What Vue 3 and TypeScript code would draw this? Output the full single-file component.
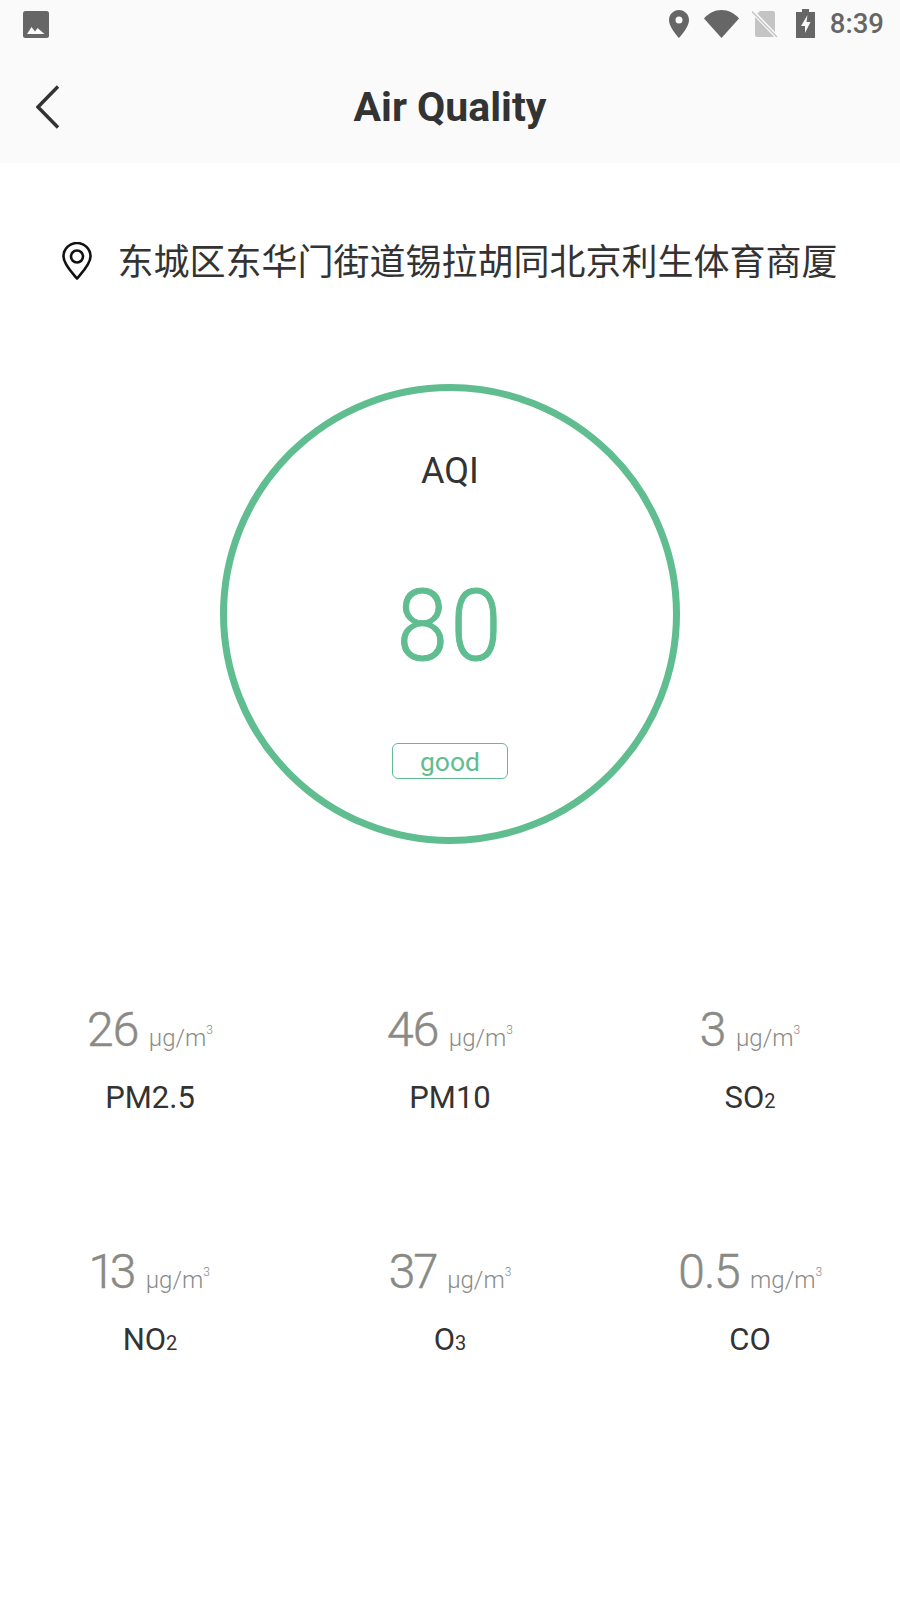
<template>
  <div class="page">
    <header class="top">
      <div class="status-bar">
        <svg class="icon-image" width="26" height="27" viewBox="0 0 26 27">
          <rect width="26" height="27" rx="2.5" fill="#666" />
          <path d="M4 23l4.500-7 3.500 4.500 2.500-3.500 7 6z" fill="#fafafa" />
        </svg>
        <div class="status-right">
          <svg width="20" height="28" viewBox="0 0 20 28">
            <path fill="#666" fill-rule="evenodd" d="M10 0C4.500 0 0 4.400 0 10c0 7.500 10 18 10 18s10-10.500 10-18C20 4.400 15.500 0 10 0zm0 6.500a3.500 3.500 0 1 1 0 7 3.500 3.500 0 0 1 0-7z" />
          </svg>
          <svg width="35" height="28" viewBox="0 0 35 28">
            <path fill="#666" d="M0 8.500C4.500 3.200 10.700 0 17.500 0S30.500 3.200 35 8.500L17.500 28z" />
          </svg>
          <svg class="icon-sim" width="26" height="28" viewBox="0 0 26 28">
            <path fill="#c4c4c4" d="M8 1h13a2 2 0 0 1 2 2v22a2 2 0 0 1-2 2H5a2 2 0 0 1-2-2V6z" />
            <path d="M0 1l25 26" stroke="#fafafa" stroke-width="4" />
            <path d="M0 1.500l25 25.500" stroke="#c4c4c4" stroke-width="1.300" />
          </svg>
          <svg class="icon-battery" width="19" height="29" viewBox="0 0 19 29">
            <path fill="#666" d="M6 0h7v3h6v26H0V3h6z" />
            <path fill="#fafafa" d="M11.500 6L5 17h4v7l5.500-11h-4z" />
          </svg>
          <span class="clock">8:39</span>
        </div>
      </div>
      <div class="toolbar">
        <svg class="back" width="24" height="44" viewBox="0 0 24 44">
          <path d="M22 1.500L2 22l20 20.500" fill="none" stroke="#333" stroke-width="3.400" />
        </svg>
        <h1 class="title">Air Quality</h1>
      </div>
    </header>

    <div class="location">
      <svg class="icon-place" width="30" height="38" viewBox="0 0 30 38">
        <path d="M15 36.500C11 31.500 1.500 22.500 1.500 14.500a13.500 13.500 0 0 1 27 0c0 8-9.500 17-13.500 22z" fill="none" stroke="#111" stroke-width="2.600" stroke-linejoin="round" />
        <circle cx="15" cy="14.500" r="6" fill="none" stroke="#111" stroke-width="2.600" />
      </svg>
      <span>东城区东华门街道锡拉胡同北京利生体育商厦</span>
    </div>

    <div class="gauge">
      <div class="gauge-label">AQI</div>
      <div class="gauge-value">{{ aqi }}</div>
      <div class="gauge-badge">good</div>
    </div>

    <div class="metrics">
      <div v-for="item in metrics" :key="item.name + item.sub" class="metric">
        <div class="reading">
          <span class="num">{{ item.value }}</span>
          <span class="unit">{{ item.unit }}<span class="cube">3</span></span>
        </div>
        <div class="name">{{ item.name }}<span v-if="item.sub" class="low">{{ item.sub }}</span></div>
      </div>
    </div>
  </div>
</template>

<script setup lang="ts">
interface Metric {
  value: string
  unit: string
  name: string
  sub?: string
}

const aqi = 80

const metrics: Metric[] = [
  { value: '26', unit: 'μg/m', name: 'PM2.5' },
  { value: '46', unit: 'μg/m', name: 'PM10' },
  { value: '3', unit: 'μg/m', name: 'SO', sub: '2' },
  { value: '13', unit: 'μg/m', name: 'NO', sub: '2' },
  { value: '37', unit: 'μg/m', name: 'O', sub: '3' },
  { value: '0.5', unit: 'mg/m', name: 'CO' },
]
</script>

<style>
html,
body {
  background: #fff;
}
</style>

<style scoped>
.page {
  width: 900px;
  height: 1600px;
  background: #fff;
  font-family: Roboto, "Noto Sans CJK SC", sans-serif;
  color: #333;
  overflow: hidden;
}

.top {
  height: 163px;
  background: #fafafa;
}

.status-bar {
  height: 54px;
  padding: 9px 16px 0 23px;
  box-sizing: border-box;
  display: flex;
  justify-content: space-between;
  align-items: flex-start;
}

.icon-image {
  margin-top: 2px;
}

.status-right {
  display: flex;
  align-items: center;
  gap: 15px;
}

.icon-sim {
  margin-left: -2px;
}

.icon-battery {
  margin-left: 3px;
}

.clock {
  font-size: 27.5px;
  font-weight: 500;
  line-height: 29px;
  color: #666;
}

.toolbar {
  height: 105px;
  display: grid;
  grid-template-columns: 1fr auto 1fr;
  align-items: center;
}

.back {
  margin-left: 36px;
}

.title {
  margin: 0;
  font-size: 41px;
  font-weight: 700;
  line-height: 48px;
  color: #333;
}

.location {
  margin-top: 71px;
  display: flex;
  justify-content: center;
  align-items: center;
  gap: 25px;
  font-size: 36px;
  line-height: 50px;
  font-family: "Noto Sans CJK SC", sans-serif;
  color: #333;
}

.icon-place {
  margin-top: 3px;
}

.gauge {
  width: 460px;
  height: 460px;
  margin: 100px auto 0;
  box-sizing: border-box;
  border: 7.500px solid #5fbd8f;
  border-radius: 50%;
  display: flex;
  flex-direction: column;
  align-items: center;
  padding-top: 59px;
}

.gauge-label {
  font-size: 36px;
  line-height: 42px;
  color: #333;
}

.gauge-value {
  margin-top: 75px;
  font-size: 100px;
  font-weight: 300;
  line-height: 118px;
  color: #5fbd8f;
  letter-spacing: 3px;
  transform: scaleX(0.92);
  -webkit-text-stroke: 1px #5fbd8f;
}

.gauge-badge {
  margin-top: 58px;
  width: 116px;
  height: 36px;
  box-sizing: border-box;
  border: 1px solid #5fbd8f;
  border-radius: 6px;
  text-align: center;
  font-size: 26.5px;
  line-height: 35px;
  color: #5fbd8f;
}

.metrics {
  margin-top: 158px;
  display: grid;
  grid-template-columns: repeat(3, 300px);
  grid-auto-rows: 242px;
}

.metric {
  display: flex;
  flex-direction: column;
  align-items: center;
}

.reading {
  display: flex;
  align-items: baseline;
  gap: 11px;
  line-height: 56px;
  color: #8a8a85;
}

.num {
  font-size: 48px;
  font-weight: 300;
  letter-spacing: -1.500px;
  font-variant-numeric: proportional-nums;
  -webkit-text-stroke: 0.5px #8a8a85;
}

.unit {
  font-size: 24px;
  font-weight: 300;
  color: #8a8a85;
}

.cube {
  font-size: 12px;
  vertical-align: 12px;
  line-height: 0;
}

.name {
  margin-top: 12px;
  font-size: 31px;
  line-height: 40px;
  color: #333;
}

.low {
  font-size: 20px;
}
</style>
